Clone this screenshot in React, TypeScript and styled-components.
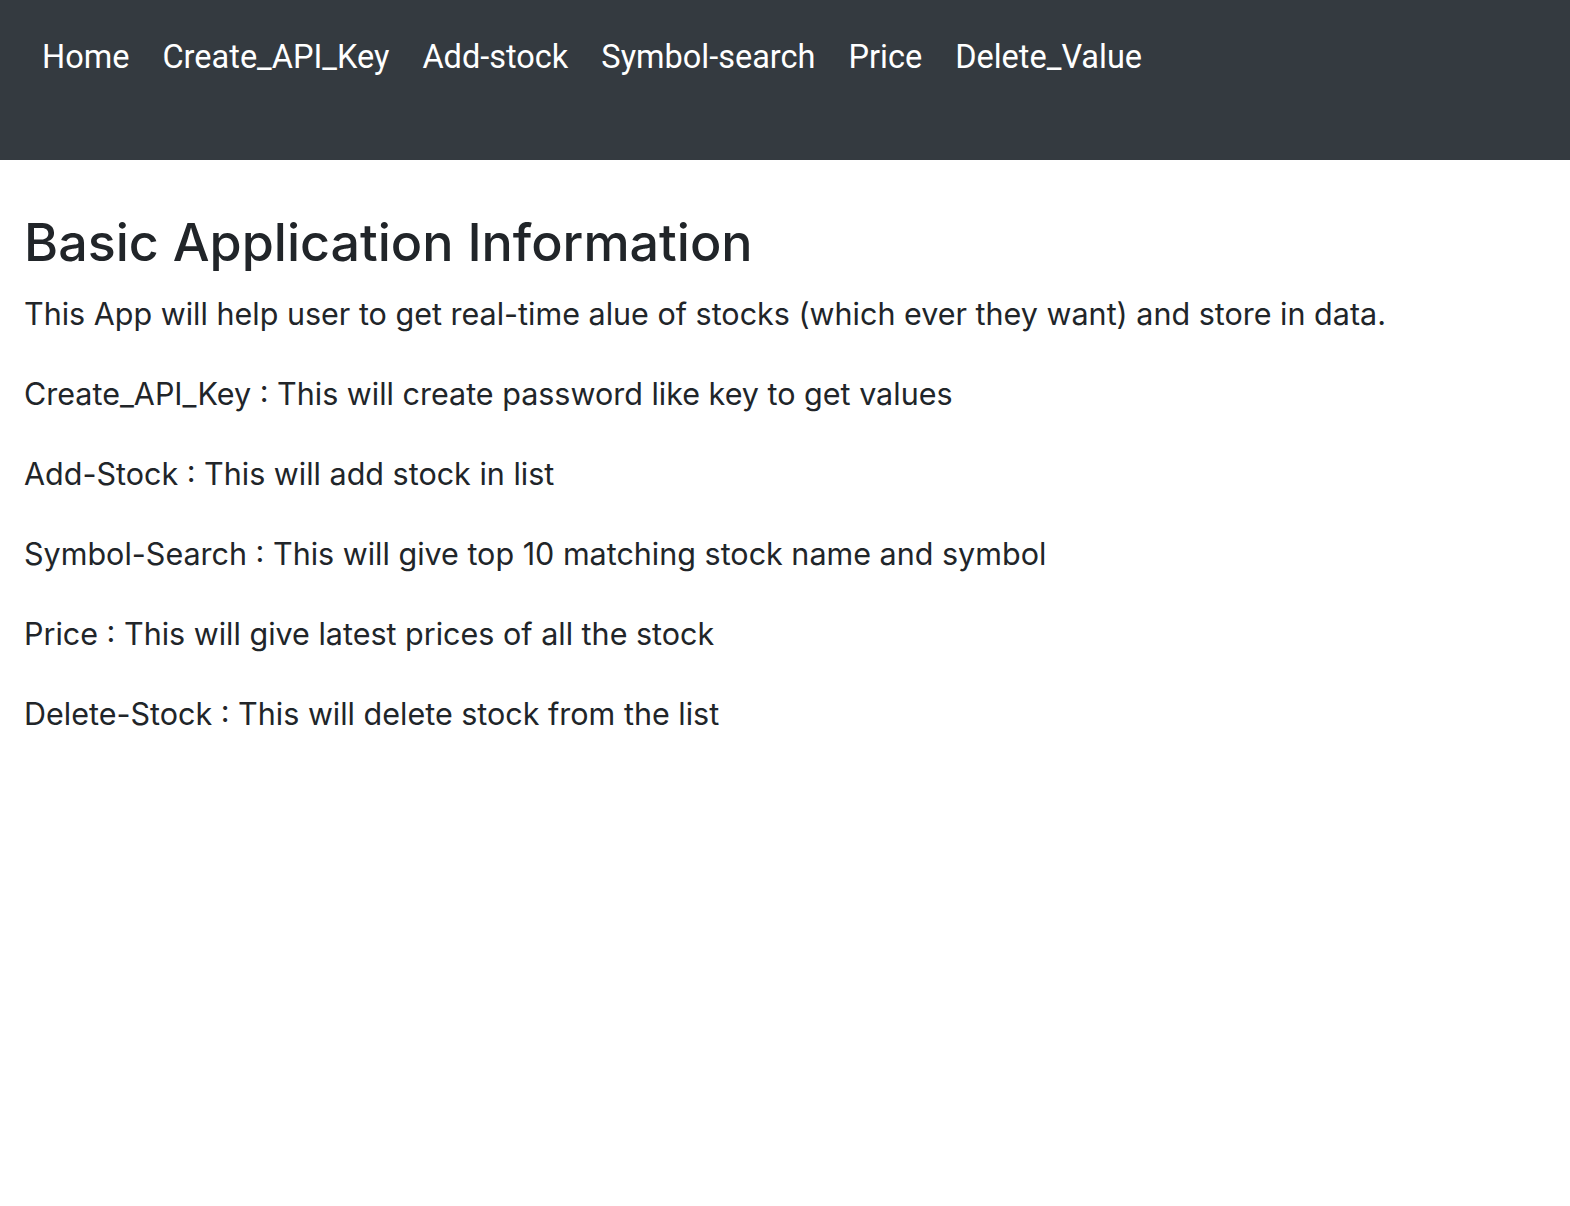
import styled, { createGlobalStyle } from 'styled-components';

const GlobalStyle = createGlobalStyle`
  body {
    margin: 0;
    background: #fff;
    color: #212529;
    font-family: Inter, "Noto Sans", sans-serif;
  }
`;

const NavBar = styled.nav`
  display: flex;
  align-items: flex-start;
  gap: 33px;
  height: 160px;
  padding: 37px 42px 0;
  box-sizing: border-box;
  background-color: #343a40;
`;

const NavLink = styled.a`
  color: #fff;
  font-family: Roboto, sans-serif;
  font-size: 32.5px;
  line-height: 40px;
  text-decoration: none;
`;

const Content = styled.main`
  padding: 50px 24px 0;
`;

const Heading = styled.h1`
  margin: 0 0 16px;
  font-size: 52px;
  font-weight: 500;
  line-height: 66px;
`;

const Text = styled.p`
  margin: 0 0 36px;
  font-size: 30.5px;
  line-height: 44px;
`;

const links = ['Home', 'Create_API_Key', 'Add-stock', 'Symbol-search', 'Price', 'Delete_Value'];

const lines = [
  'This App will help user to get real-time alue of stocks (which ever they want) and store in data.',
  'Create_API_Key : This will create password like key to get values',
  'Add-Stock : This will add stock in list',
  'Symbol-Search : This will give top 10 matching stock name and symbol',
  'Price : This will give latest prices of all the stock',
  'Delete-Stock : This will delete stock from the list',
];

const App = () => (
  <>
    <GlobalStyle />
    <NavBar>
      {links.map((l) => (
        <NavLink key={l} href="#">
          {l}
        </NavLink>
      ))}
    </NavBar>
    <Content>
      <Heading>Basic Application Information</Heading>
      {lines.map((t) => (
        <Text key={t}>{t}</Text>
      ))}
    </Content>
  </>
);

export default App;
